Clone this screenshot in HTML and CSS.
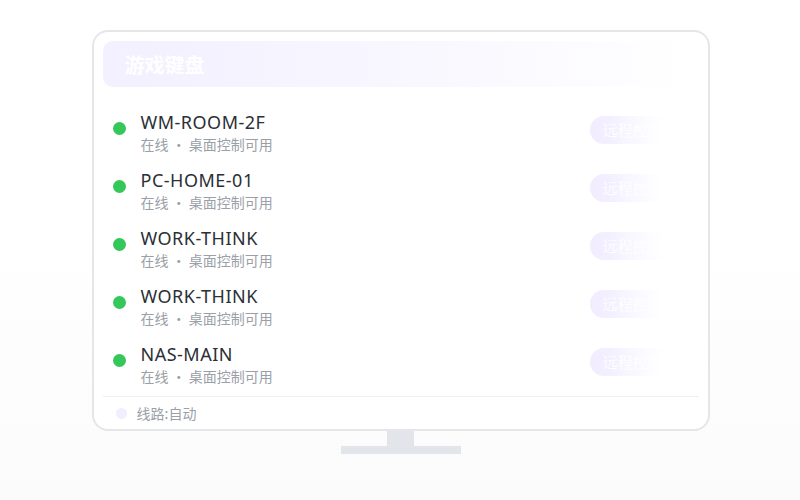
FILE: index.html
```html
<!DOCTYPE html>
<html lang="zh">
<head>
<meta charset="utf-8">
<link rel="stylesheet" href="styles.css">
</head>
<body>
<div class="stage">
  <div class="monitor">
    <div class="screen">
      <div class="header">
        <span class="title">游戏键盘</span>
        <span class="hint">在线</span>
      </div>
      <div class="list">
        <div class="row">
          <span class="dot"></span>
          <div class="info"><div class="name">WM-ROOM-2F</div><div class="sub">在线 · 桌面控制可用</div></div>
          <span class="btn">远程控制</span>
        </div>
        <div class="row">
          <span class="dot"></span>
          <div class="info"><div class="name">PC-HOME-01</div><div class="sub">在线 · 桌面控制可用</div></div>
          <span class="btn">远程控制</span>
        </div>
        <div class="row">
          <span class="dot"></span>
          <div class="info"><div class="name">WORK-THINK</div><div class="sub">在线 · 桌面控制可用</div></div>
          <span class="btn">远程控制</span>
        </div>
        <div class="row">
          <span class="dot"></span>
          <div class="info"><div class="name">WORK-THINK</div><div class="sub">在线 · 桌面控制可用</div></div>
          <span class="btn">远程控制</span>
        </div>
        <div class="row">
          <span class="dot"></span>
          <div class="info"><div class="name">NAS-MAIN</div><div class="sub">在线 · 桌面控制可用</div></div>
          <span class="btn">远程控制</span>
        </div>
        <div class="fade"></div>
      </div>
      <div class="footer">
        <span class="fdot"></span>
        <span class="ftext">线路:自动</span>
      </div>
    </div>
    <div class="neck"></div>
    <div class="base"></div>
  </div>
</div>
</body>
</html>
```

FILE: styles.css
```css
html, body {
  margin: 0;
  padding: 0;
}
body {
  width: 800px;
  height: 500px;
  overflow: hidden;
  background: linear-gradient(180deg, #ffffff 0%, #ffffff 45%, #fbfbfc 100%);
  font-family: "Noto Sans", "Noto Sans CJK SC", sans-serif;
}
.stage {
  display: flex;
  justify-content: center;
  padding-top: 30px;
  padding-left: 1px;
}
.monitor {
  display: flex;
  flex-direction: column;
  align-items: center;
}
.screen {
  position: relative;
  width: 596px;
  padding: 9px 9px 7px 9px;
  border: 2px solid #e4e6ea;
  border-radius: 16px;
  background: #ffffff;
  overflow: hidden;
}
.header {
  height: 46px;
  border-radius: 10px;
  background: linear-gradient(90deg, #f3f0ff 0%, #f7f5ff 40%, #ffffff 100%);
  display: flex;
  align-items: center;
  justify-content: space-between;
  padding: 0 22px;
}
.title {
  color: #ffffff;
  font-family: "Noto Sans CJK SC", sans-serif;
  font-weight: 700;
  font-size: 20px;
}
.hint {
  color: #ffffff;
  font-size: 14px;
  font-family: "Noto Sans CJK SC", sans-serif;
}
.list {
  position: relative;
  margin-top: 16px;
}
.row {
  height: 58px;
  display: flex;
  align-items: center;
  padding: 0 10px;
  box-sizing: border-box;
}
.dot {
  width: 13px;
  height: 13px;
  border-radius: 50%;
  background: #34c759;
  margin: 0 15px 8px 0;
  flex: none;
}
.info {
  flex: 1;
  display: flex;
  flex-direction: column;
}
.name {
  font-size: 18px;
  line-height: 22px;
  color: #2b2f36;
  letter-spacing: 0.5px;
}
.sub {
  margin-top: 2px;
  font-size: 14px;
  line-height: 18px;
  color: #9aa0a8;
  font-family: "Noto Sans CJK SC", sans-serif;
}
.btn {
  margin: 0 14px 4px 0;
  height: 28px;
  line-height: 28px;
  padding: 0 12px;
  border-radius: 14px;
  background: linear-gradient(90deg, #f1edff, #f8f6ff);
  color: #ffffff;
  font-size: 15px;
  font-family: "Noto Serif CJK SC", "Noto Sans CJK SC", serif;
  white-space: nowrap;
}
.fade {
  position: absolute;
  top: 0;
  right: -9px;
  width: 100px;
  height: 100%;
  background: linear-gradient(90deg, rgba(255,255,255,0) 0%, rgba(255,255,255,0.7) 40%, #ffffff 55%);
  pointer-events: none;
}
.footer {
  margin-top: 3px;
  border-top: 1px solid #eef0f3;
  padding: 7px 0 0 13px;
  display: flex;
  align-items: center;
  height: 18px;
  box-sizing: content-box;
}
.fdot {
  width: 11px;
  height: 11px;
  border-radius: 50%;
  background: #f0eeff;
  margin-right: 10px;
}
.ftext {
  font-size: 14px;
  line-height: 18px;
  color: #9aa0a8;
  font-family: "Noto Sans CJK SC", sans-serif;
}
.neck {
  width: 27px;
  height: 15px;
  background: #e2e5e9;
}
.base {
  width: 120px;
  height: 8px;
  background: #e2e5e9;
}
```
